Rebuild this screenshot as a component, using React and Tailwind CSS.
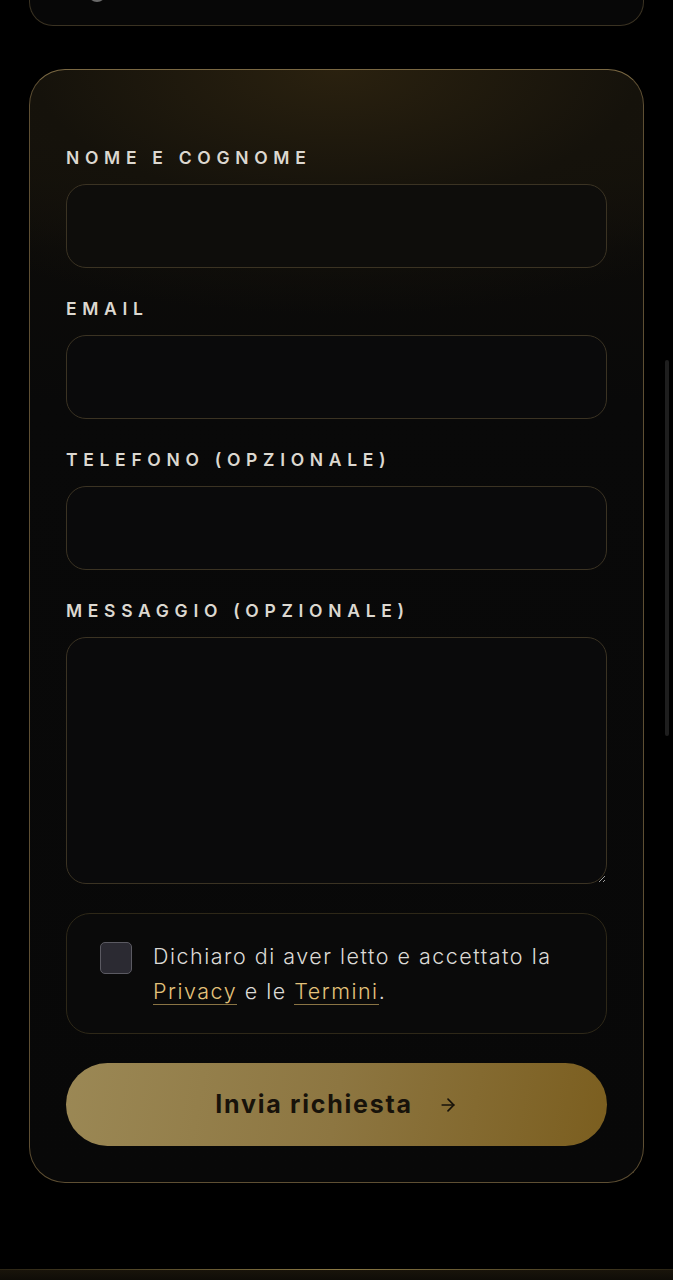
import React from 'react';
import { ArrowRight } from 'lucide-react';

const font = { fontFamily: 'Inter, "Noto Sans", sans-serif' };

function Field({ label, children }) {
  return (
    <div className="flex flex-col">
      <label className="text-[17.5px] leading-[20px] font-semibold tracking-[0.325em] text-[#dcd8d0] mb-4 whitespace-nowrap">
        {label}
      </label>
      {children}
    </div>
  );
}

const inputCls =
  'w-full h-[84px] rounded-[20px] border border-[#3b3323] bg-[#0a0a0b] px-5 text-[18px] text-white outline-none';

export default function App() {
  return (
    <div className="min-h-screen w-full bg-black relative overflow-hidden" style={font}>
      {/* previous card, only its bottom edge shows */}
      <div className="mx-[29px] h-[26px] rounded-b-[24px] border-x border-b border-[#3a3222] bg-[#070707] relative">
        <div className="absolute left-[58px] -top-[8px] w-[18px] h-[10px] rounded-b-full border-b-2 border-[#6a6a6a]" />
      </div>

      <div className="mx-[29px] mt-[43px] rounded-[36px] border border-[#5e4f33] border-t-[#7a6843] bg-[radial-gradient(ellipse_90%_22%_at_50%_0%,#2a210f_0%,#15120b_55%,transparent_100%),linear-gradient(180deg,#1c170d_0%,#0c0b09_16%,#090909_30%,#080808_100%)] px-[36px] pt-[78px] pb-[36px]">
        <div className="flex flex-col gap-[31px]">
          <Field label="NOME E COGNOME">
            <input className={inputCls + ' bg-[#0e0d0b]'} />
          </Field>
          <Field label="EMAIL">
            <input className={inputCls} />
          </Field>
          <Field label="TELEFONO (OPZIONALE)">
            <input className={inputCls} />
          </Field>
          <Field label="MESSAGGIO (OPZIONALE)">
            <textarea className="w-full h-[247px] rounded-[20px] border border-[#3b3323] bg-[#0a0a0b] px-5 py-4 text-[18px] text-white outline-none block" />
          </Field>
        </div>

        <div className="mt-[29px] h-[121px] rounded-[24px] border border-[#2e2818] bg-[#0a0a0a] flex items-start gap-[21px] pl-[33px] pr-3 pt-[28px]">
          <div className="w-[32px] h-[32px] shrink-0 rounded-[5px] border border-[#5b5a62] bg-[#2b2a32]" />
          <p className="text-[21.5px] leading-[35px] tracking-[0.07em] font-light text-[#dcdad6] -mt-[3px] whitespace-nowrap">
            Dichiaro di aver letto e accettato la
            <br />
            <span className="text-[#e3c27a] border-b border-[#8a7444]">Privacy</span> e le{' '}
            <span className="text-[#e3c27a] border-b border-[#8a7444]">Termini</span>.
          </p>
        </div>

        <button className="mt-[29px] w-full h-[83px] rounded-full bg-[linear-gradient(100deg,#9b8855_0%,#8d7641_50%,#7b5e1f_100%)] flex items-center justify-center gap-[25px] text-[#17120a]">
          <span className="text-[25px] font-bold tracking-[0.07em]">Invia richiesta</span>
          <ArrowRight className="w-[20px] h-[20px]" strokeWidth={2} />
        </button>
      </div>

      <div className="mt-[86px] h-[14px] relative bg-[linear-gradient(180deg,#1a150b,#0c0a06)]">
        <div className="absolute inset-x-0 top-0 h-px bg-[linear-gradient(90deg,#2a2414_0%,#8c7a45_50%,#2a2414_100%)]" />
      </div>

      {/* overlay scrollbar */}
      <div className="absolute right-[4px] top-[360px] w-[4px] h-[376px] rounded-full bg-[#1e1e1e]" />
    </div>
  );
}
